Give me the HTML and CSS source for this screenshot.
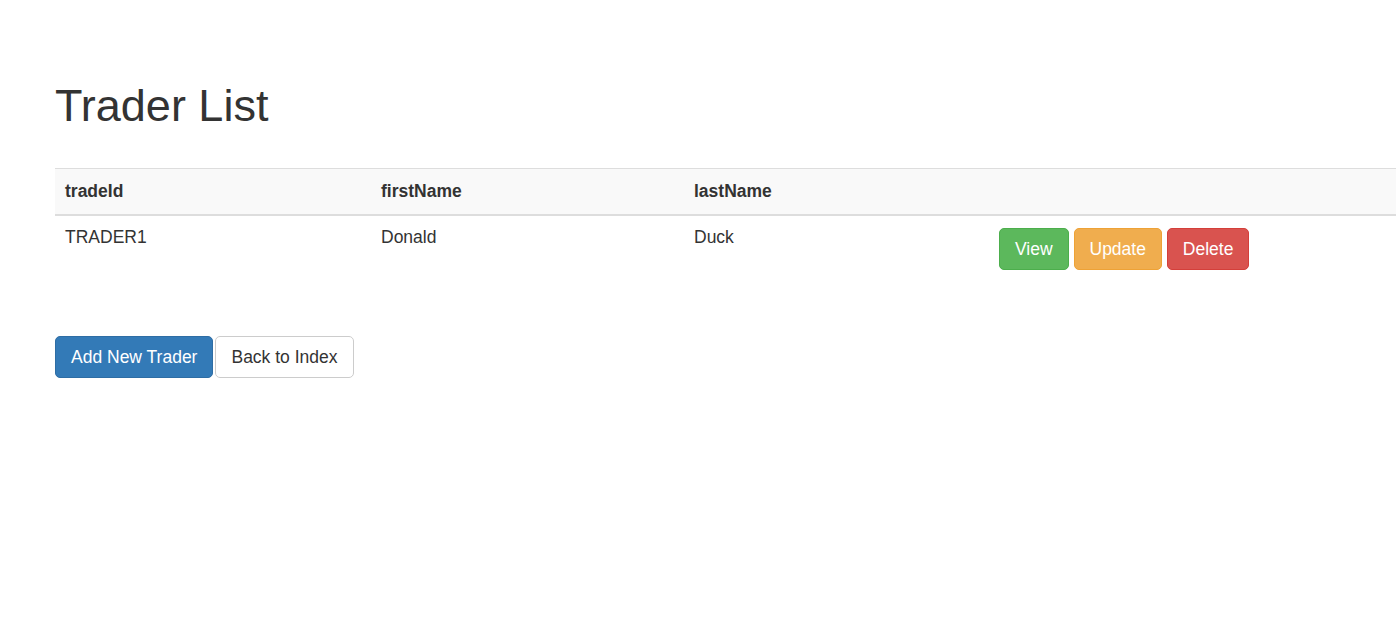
FILE: index.html
```html
<!DOCTYPE html>
<html lang="en">
<head>
<meta charset="utf-8">
<title>Trader List</title>
<link rel="stylesheet" href="styles.css">
</head>
<body>
<div class="page">
  <h1 class="title">Trader List</h1>
  <table class="table">
    <colgroup>
      <col class="c1"><col class="c2"><col class="c3"><col class="c4">
    </colgroup>
    <thead>
      <tr><th>tradeId</th><th>firstName</th><th>lastName</th><th></th></tr>
    </thead>
    <tbody>
      <tr>
        <td>TRADER1</td>
        <td>Donald</td>
        <td>Duck</td>
        <td class="actions"><a class="btn btn-success">View</a> <a class="btn btn-warning">Update</a> <a class="btn btn-danger">Delete</a></td>
      </tr>
    </tbody>
  </table>
  <div class="footer-actions">
    <a class="btn btn-primary">Add New Trader</a><a class="btn btn-default">Back to Index</a>
  </div>
</div>
</body>
</html>
```
FILE: styles.css
```css
html, body {
  margin: 0;
  padding: 0;
  background: #fff;
}
body {
  font-family: "Liberation Sans", Arial, Helvetica, sans-serif;
  font-size: 17.5px;
  line-height: 25px;
  color: #333;
  overflow: hidden;
}
.page {
  padding: 81px 0 0 55px;
}
.title {
  font-size: 45px;
  font-weight: 500;
  line-height: 49.5px;
  margin: 0 0 37.5px 0;
  color: #333;
}
.table {
  width: 100%;
  border-collapse: collapse;
  border-spacing: 0;
  margin-bottom: 56px;
}
.c1 { width: 316px; }
.c2 { width: 313px; }
.c3 { width: 305px; }
.table th, .table td {
  padding: 10px;
  text-align: left;
  vertical-align: top;
  line-height: 25px;
}
.table tbody td {
  padding-top: 9px;
  padding-bottom: 11px;
}
.table thead th {
  background: #f9f9f9;
  border-top: 1px solid #ddd;
  border-bottom: 2px solid #ddd;
  font-weight: bold;
}
.table tbody td.actions {
  padding-top: 12px;
  padding-bottom: 10px;
}
.btn {
  display: inline-block;
  padding: 7.5px 15px;
  font-size: 17.5px;
  line-height: 25px;
  border: 1px solid transparent;
  border-radius: 5px;
  text-align: center;
  vertical-align: middle;
  cursor: pointer;
  text-decoration: none;
  white-space: nowrap;
}
.btn-success { background: #5cb85c; border-color: #4cae4c; color: #fff; }
.btn-warning { background: #f0ad4e; border-color: #eea236; color: #fff; }
.btn-danger { background: #d9534f; border-color: #d43f3a; color: #fff; }
.btn-primary { background: #337ab7; border-color: #2e6da4; color: #fff; }
.btn-default { background: #fff; border-color: #ccc; color: #333; }
.footer-actions {
  display: flex;
  gap: 2px;
}
```
